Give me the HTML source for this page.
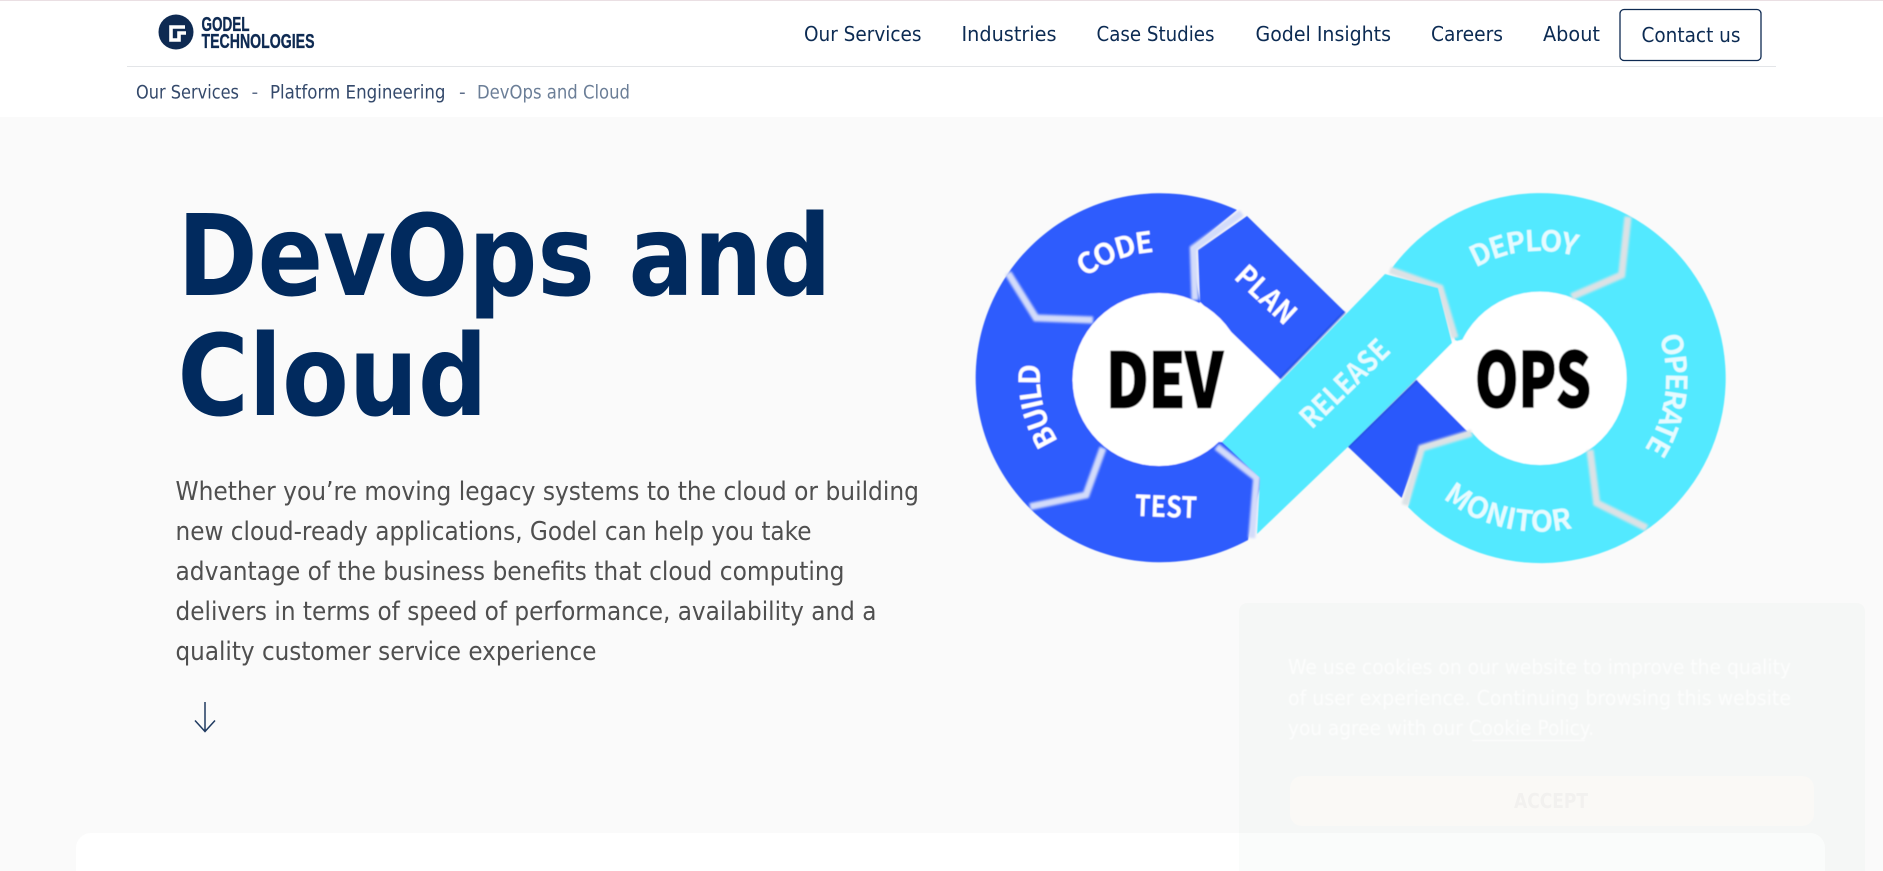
<!DOCTYPE html>
<html lang="en"><head><meta charset="utf-8"><title>DevOps and Cloud</title>
<style>
html,body{margin:0;padding:0;width:1883px;height:871px;overflow:hidden;background:#fafafa}
svg{display:block;position:absolute;left:0;top:0}
.n{font-family:"DejaVu Sans",sans-serif;font-size:20px;fill:#0c2b53}
.b{font-family:"DejaVu Sans",sans-serif;font-size:18.5px;fill:#34496b}
.h{font-family:"DejaVu Sans",sans-serif;font-weight:700;font-size:112px;fill:#012a5e}
.p{font-family:"DejaVu Sans",sans-serif;font-size:25.5px;fill:#4f4f4f}
.l{font-family:"Noto Sans CJK SC","DejaVu Sans",sans-serif;font-weight:700;font-size:29px;fill:#fff}
.c{font-family:"Noto Sans CJK SC","Liberation Sans",sans-serif;font-weight:900;fill:#000;stroke:#000;stroke-width:1.6}
.g{font-family:"Liberation Sans",sans-serif;font-weight:700;font-size:20px;fill:#0e2a52;stroke:#0e2a52;stroke-width:.35}
.k{font-family:"DejaVu Sans",sans-serif;font-size:20.5px;fill:#fff;fill-opacity:.75}
</style></head><body>
<svg width="1883" height="871" viewBox="0 0 1883 871" xmlns="http://www.w3.org/2000/svg">
<defs>
<filter id="s1" x="-5%" y="-5%" width="110%" height="110%"><feGaussianBlur stdDeviation="0.45"/></filter>
<filter id="s2" x="-20%" y="-20%" width="140%" height="140%"><feGaussianBlur stdDeviation="1"/></filter>
<filter id="s3" x="-20%" y="-20%" width="140%" height="140%"><feGaussianBlur stdDeviation="0.7"/></filter>
<path id="a1" d="M1043.2 335.3A125 125 0 0 1 1222.5 268.2"/>
<path id="a2" d="M1107 485.3A121 121 0 0 1 1063.7 305"/>
<path id="a3" d="M1432.5 308.8A127 127 0 0 1 1625.6 285.2"/>
<path id="a4" d="M1631.9 291.4A127 127 0 0 1 1608.2 484.5"/>
<path id="a5" d="M1402 447.8A153.7 153.7 0 0 0 1631.5 500.7"/>
</defs>
<rect width="1883" height="871" fill="#fafafa"/>
<rect width="1883" height="117" fill="#fff"/>
<rect width="1883" height="1" fill="#eadfe3"/>
<rect x="127" y="66" width="1649" height="1" fill="#e3e5e8"/>

<!-- logo -->
<circle cx="176" cy="32" r="17.5" fill="#0e2a52"/>
<path d="M185 27H171V40H179V33H186" fill="none" stroke="#fff" stroke-width="3.6"/>
<text class="g" x="201.5" y="31" textLength="48" lengthAdjust="spacingAndGlyphs">GODEL</text>
<text class="g" x="201.5" y="48" textLength="113" lengthAdjust="spacingAndGlyphs">TECHNOLOGIES</text>

<!-- nav -->
<text class="n" x="804" y="41" textLength="117.5" lengthAdjust="spacingAndGlyphs">Our Services</text>
<text class="n" x="961.5" y="41" textLength="95" lengthAdjust="spacingAndGlyphs">Industries</text>
<text class="n" x="1096.5" y="41" textLength="118" lengthAdjust="spacingAndGlyphs">Case Studies</text>
<text class="n" x="1255.5" y="41" textLength="135.5" lengthAdjust="spacingAndGlyphs">Godel Insights</text>
<text class="n" x="1431" y="41" textLength="72" lengthAdjust="spacingAndGlyphs">Careers</text>
<text class="n" x="1543" y="41" textLength="57" lengthAdjust="spacingAndGlyphs">About</text>
<rect x="1620" y="9.5" width="141" height="51" rx="4" fill="#fff" stroke="#0e2a52" stroke-width="1.3"/>
<text class="n" x="1641.5" y="42" textLength="99" lengthAdjust="spacingAndGlyphs">Contact us</text>

<!-- breadcrumb -->
<text class="b" x="136" y="98.5" textLength="103" lengthAdjust="spacingAndGlyphs">Our Services</text>
<text class="b" x="251.5" y="98.5" fill-opacity=".8">-</text>
<text class="b" x="270" y="98.5" textLength="175.5" lengthAdjust="spacingAndGlyphs">Platform Engineering</text>
<text class="b" x="459" y="98.5" fill-opacity=".8">-</text>
<text class="b" x="477" y="98.5" textLength="153" lengthAdjust="spacingAndGlyphs" style="fill:#6b7e97">DevOps and Cloud</text>

<!-- hero -->
<text class="h" x="177.5" y="295" textLength="654" lengthAdjust="spacingAndGlyphs">DevOps and</text>
<text class="h" x="177.5" y="415" textLength="310" lengthAdjust="spacingAndGlyphs">Cloud</text>
<text class="p" x="175.5" y="500" textLength="743.5" lengthAdjust="spacingAndGlyphs">Whether you’re moving legacy systems to the cloud or building</text>
<text class="p" x="175.5" y="540" textLength="636" lengthAdjust="spacingAndGlyphs">new cloud-ready applications, Godel can help you take</text>
<text class="p" x="175.5" y="580" textLength="669" lengthAdjust="spacingAndGlyphs">advantage of the business benefits that cloud computing</text>
<text class="p" x="175.5" y="620" textLength="701" lengthAdjust="spacingAndGlyphs">delivers in terms of speed of performance, availability and a</text>
<text class="p" x="175.5" y="660" textLength="421" lengthAdjust="spacingAndGlyphs">quality customer service experience</text>
<path d="M205 702V731M195 720.5L205 731.5L215 720.5" fill="none" stroke="#1f3a60" stroke-width="1.5"/>

<!-- diagram -->
<g filter="url(#s1)">
<path d="M1237 210A184.5 184.5 0 1 0 1248 540L1262 478L1222 442L1200 302L1191 248Z" fill="#2e5cfd"/>
<path d="M1247 216L1198 250L1200 302L1280 379L1345 312Z" fill="#2e5cfd"/>
<path d="M1416.7 380L1468 431.7L1420 446.7L1401.7 498L1348 446.7Z" fill="#2c59fb"/>
<path d="M1392 268A185 185 0 1 1 1408 507L1421 448L1472 432L1540 378L1455 340L1440 288Z" fill="#53e9ff"/>
<circle cx="1159" cy="379.5" r="86.5" fill="#fff"/>
<circle cx="1540" cy="378.3" r="86.7" fill="#fff"/>
<path d="M1200 302L1280 379L1222 442L1150 440Z" fill="#fff"/>
<path d="M1453 342L1416.7 380L1468 432L1540 440L1540 320Z" fill="#fff"/>
<g fill="none" stroke="#d3dbfa" stroke-width="7" filter="url(#s2)">
<path d="M1241.7 213L1193.3 248.3L1195 300"/>
<path d="M1008 273L1036 318L1093 320"/>
<path d="M1030 506.7L1086 495L1103 448"/>
<path d="M1216.7 446.7L1256.7 478L1251.7 538"/>
</g>
<g fill="none" stroke="#dce2e5" stroke-width="7" filter="url(#s2)">
<path d="M1390 270L1440 288L1455 338"/>
<path d="M1628 216.7L1621.7 275L1571.7 296.7"/>
<path d="M1590 450L1596.7 503L1646.7 528"/>
<path d="M1405 505L1421.7 448L1471.7 433"/>
</g>
<path d="M1345 312L1280 379M1416.7 380L1348 446.7" fill="none" stroke="#1c3fc9" stroke-opacity=".5" stroke-width="3" filter="url(#s3)"/>
<path d="M1222 441.7L1385 274L1438 288L1452 343L1348 446.7L1257 534L1260 478Z" fill="#53e9ff"/>

<text class="l" text-anchor="middle" letter-spacing="-1.4"><textPath href="#a1" startOffset="50%">CODE</textPath></text>
<text class="l" text-anchor="middle" letter-spacing="-2"><textPath href="#a2" startOffset="50%">BUILD</textPath></text>
<text class="l" text-anchor="middle" letter-spacing="-1.8"><textPath href="#a3" startOffset="50%" style="fill:#e6fbff">DEPLOY</textPath></text>
<text class="l" text-anchor="middle" letter-spacing="-2.3"><textPath href="#a4" startOffset="50%" style="fill:#e6fbff">OPERATE</textPath></text>
<text class="l" text-anchor="middle"><textPath href="#a5" startOffset="50%" style="fill:#e6fbff">MONITOR</textPath></text>
<text class="l" x="1135" y="517" textLength="62" lengthAdjust="spacingAndGlyphs" transform="rotate(2 1166 507)">TEST</text>
<text class="l" transform="translate(1233 278) rotate(43)" textLength="71" lengthAdjust="spacingAndGlyphs">PLAN</text>
<text class="l" transform="translate(1311.7 430) rotate(-44.3)" textLength="112" lengthAdjust="spacingAndGlyphs" style="fill:#e6fbff">RELEASE</text>
<text class="c" x="1106" y="407.5" font-size="75" textLength="117" lengthAdjust="spacingAndGlyphs">DEV</text>
<text class="c" x="1475" y="407" font-size="75" textLength="116" lengthAdjust="spacingAndGlyphs">OPS</text>
</g>

<!-- bottom card -->
<path d="M76 871V848A15 15 0 0 1 91 833H1810A15 15 0 0 1 1825 848V871Z" fill="#fff"/>

<!-- cookie -->
<rect x="1239" y="603" width="626" height="290" rx="8" fill="#00503c" fill-opacity=".018"/>
<g filter="url(#s1)">
<text class="k" x="1288" y="674" textLength="503" lengthAdjust="spacingAndGlyphs">We use cookies on our website to improve the quality</text>
<text class="k" x="1288" y="705" textLength="503" lengthAdjust="spacingAndGlyphs">of user experience. Continuing browsing this website</text>
<text class="k" x="1288" y="735" textLength="306" lengthAdjust="spacingAndGlyphs">you agree with our Cookie Policy.</text>
<rect x="1472" y="740" width="113" height="1" fill="#fff" fill-opacity=".8"/>
</g>
<rect x="1290" y="776" width="524" height="50" rx="12" fill="#faf9f6"/>
<text x="1514" y="808" font-family="'DejaVu Sans',sans-serif" font-size="20" font-weight="700" fill="#f2f1ef" textLength="74" lengthAdjust="spacingAndGlyphs">ACCEPT</text>
</svg>
</body></html>
